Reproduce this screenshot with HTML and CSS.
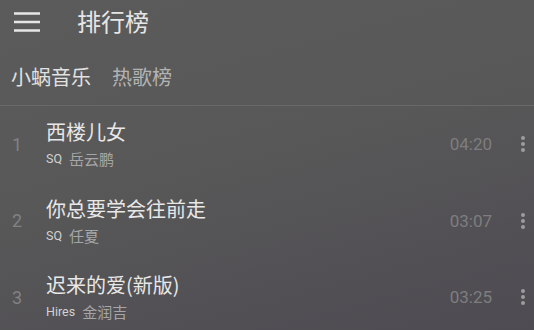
FILE: index.html
```html
<!DOCTYPE html>
<html lang="zh">
<head>
<meta charset="utf-8">
<link rel="stylesheet" href="styles.css">
</head>
<body>
<div class="app">
  <header class="topbar">
    <svg class="menu" width="26" height="22" viewBox="0 0 26 22">
      <path d="M0 3.5H26M0 12H26M0 20.5H26" stroke="#e6e6e6" stroke-width="2.6" fill="none"/>
    </svg>
    <h1 class="title">排行榜</h1>
  </header>
  <nav class="tabs">
    <span class="tab active">小蜗音乐</span>
    <span class="tab">热歌榜</span>
  </nav>
  <ul class="list">
    <li class="row">
      <span class="num">1</span>
      <div class="info">
        <div class="name">西楼儿女</div>
        <div class="sub"><span class="tag">SQ</span><span class="artist">岳云鹏</span></div>
      </div>
      <span class="dur">04:20</span>
      <span class="more"><i></i><i></i><i></i></span>
    </li>
    <li class="row">
      <span class="num">2</span>
      <div class="info">
        <div class="name">你总要学会往前走</div>
        <div class="sub"><span class="tag">SQ</span><span class="artist">任夏</span></div>
      </div>
      <span class="dur">03:07</span>
      <span class="more"><i></i><i></i><i></i></span>
    </li>
    <li class="row">
      <span class="num">3</span>
      <div class="info">
        <div class="name">迟来的爱(新版)</div>
        <div class="sub"><span class="tag">Hires</span><span class="artist">金润吉</span></div>
      </div>
      <span class="dur">03:25</span>
      <span class="more"><i></i><i></i><i></i></span>
    </li>
  </ul>
</div>
</body>
</html>
```
FILE: styles.css
```css
* { box-sizing: border-box; }
html, body {
  margin: 0;
  padding: 0;
  width: 534px;
  height: 330px;
  overflow: hidden;
}
body {
  font-family: "Roboto", "Noto Sans CJK SC", sans-serif;
  background: linear-gradient(165deg, #5b5b5b 0%, #585858 45%, #514f54 80%, #4e4b52 100%);
  color: #e6e6e6;
}
.app {
  display: flex;
  flex-direction: column;
  height: 330px;
}
.topbar {
  flex-shrink: 0;
  height: 42px;
  display: flex;
  align-items: center;
  padding-left: 14px;
}
.menu { display: block; }
.title {
  margin: 0 0 0 37px;
  font-family: "Noto Sans CJK SC", sans-serif;
  font-weight: 400;
  font-size: 24px;
  line-height: 42px;
  color: #e6e6e6;
}
.tabs {
  flex-shrink: 0;
  height: 64px;
  display: flex;
  align-items: center;
  gap: 21px;
  padding: 6px 0 0 11px;
  border-bottom: 1px solid #696969;
}
.tab {
  font-family: "Noto Sans CJK SC", sans-serif;
  font-size: 20px;
  line-height: 28px;
  color: #b3b3b3;
}
.tab.active { color: #e2e2e2; }
.list {
  flex-shrink: 0;
  list-style: none;
  margin: 0;
  padding: 0;
}
.row {
  height: 76.5px;
  display: flex;
  align-items: center;
}
.num {
  width: 46px;
  padding-left: 12px;
  font-size: 18px;
  color: #828282;
}
.info {
  flex: 1;
  display: flex;
  flex-direction: column;
  gap: 4px;
}
.name {
  font-family: "Noto Sans CJK SC", sans-serif;
  font-size: 20px;
  line-height: 26px;
  color: #e8e8e8;
}
.sub {
  display: flex;
  align-items: center;
  gap: 7px;
  line-height: 20px;
}
.tag {
  font-size: 12.5px;
  color: #d2d2d2;
}
.artist {
  font-family: "Noto Sans CJK SC", sans-serif;
  font-size: 15px;
  color: #a6a6a6;
}
.dur {
  font-size: 17px;
  color: #7e7e7e;
  margin-right: 20px;
}
.more {
  width: 22px;
  display: flex;
  flex-direction: column;
  align-items: center;
  gap: 2px;
}
.more i {
  width: 4px;
  height: 4px;
  border-radius: 50%;
  background: #9c9c9c;
}
```
